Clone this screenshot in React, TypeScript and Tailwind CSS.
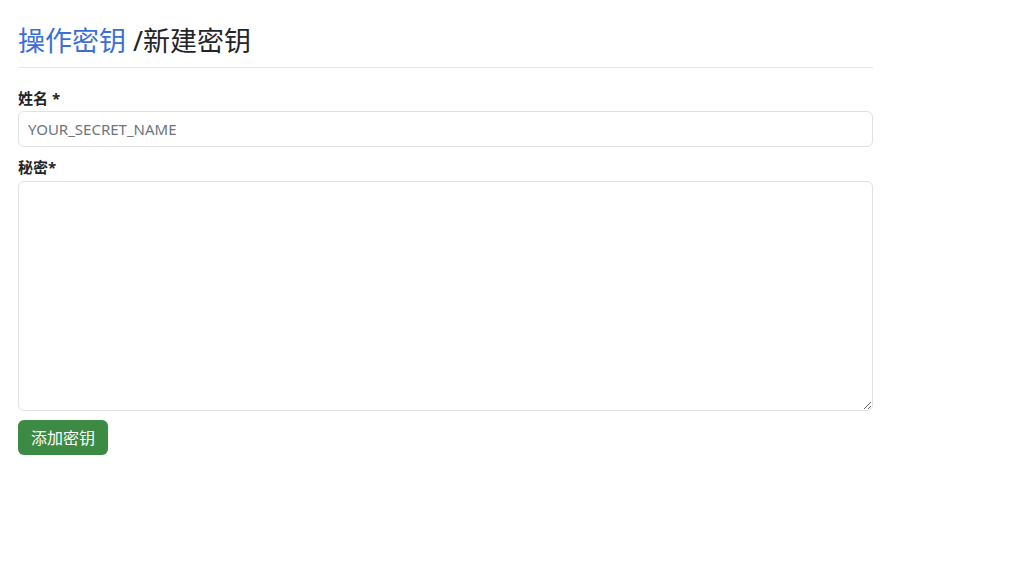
import React from "react";

export default function App() {
  const font = { fontFamily: '"Noto Sans", "Noto Sans CJK SC", sans-serif' };
  return (
    <div className="w-[1024px] h-[583px] bg-white text-[#212529]" style={font}>
      <div className="w-[855px] ml-[18px] pt-[22px]">
        <h3 className="text-[27px] leading-[38px] font-normal pb-[7px] border-b border-[#e5e7eb]">
          <span className="text-[#3b6fd6]">操作密钥</span> /新建密钥
        </h3>
        <div className="mt-[19px]">
          <label className="block text-[15px] leading-[22px] font-bold mb-[2px]">姓名 *</label>
          <input
            className="block w-full h-[36px] border border-[#dee2e6] rounded-[6px] px-[9px] text-[15px] placeholder:text-[#6c757d] outline-none"
            placeholder="YOUR_SECRET_NAME"
          />
        </div>
        <div className="mt-[9px]">
          <label className="block text-[15px] leading-[22px] font-bold mb-[3px]">秘密*</label>
          <textarea className="block w-full h-[230px] border border-[#dee2e6] rounded-[6px] px-[9px] py-[6px] text-[15px] outline-none" />
        </div>
        <button className="mt-[9px] h-[35px] px-[13px] rounded-[6px] bg-[#3c8a44] text-white text-[16px] leading-[22px]">
          添加密钥
        </button>
      </div>
    </div>
  );
}
